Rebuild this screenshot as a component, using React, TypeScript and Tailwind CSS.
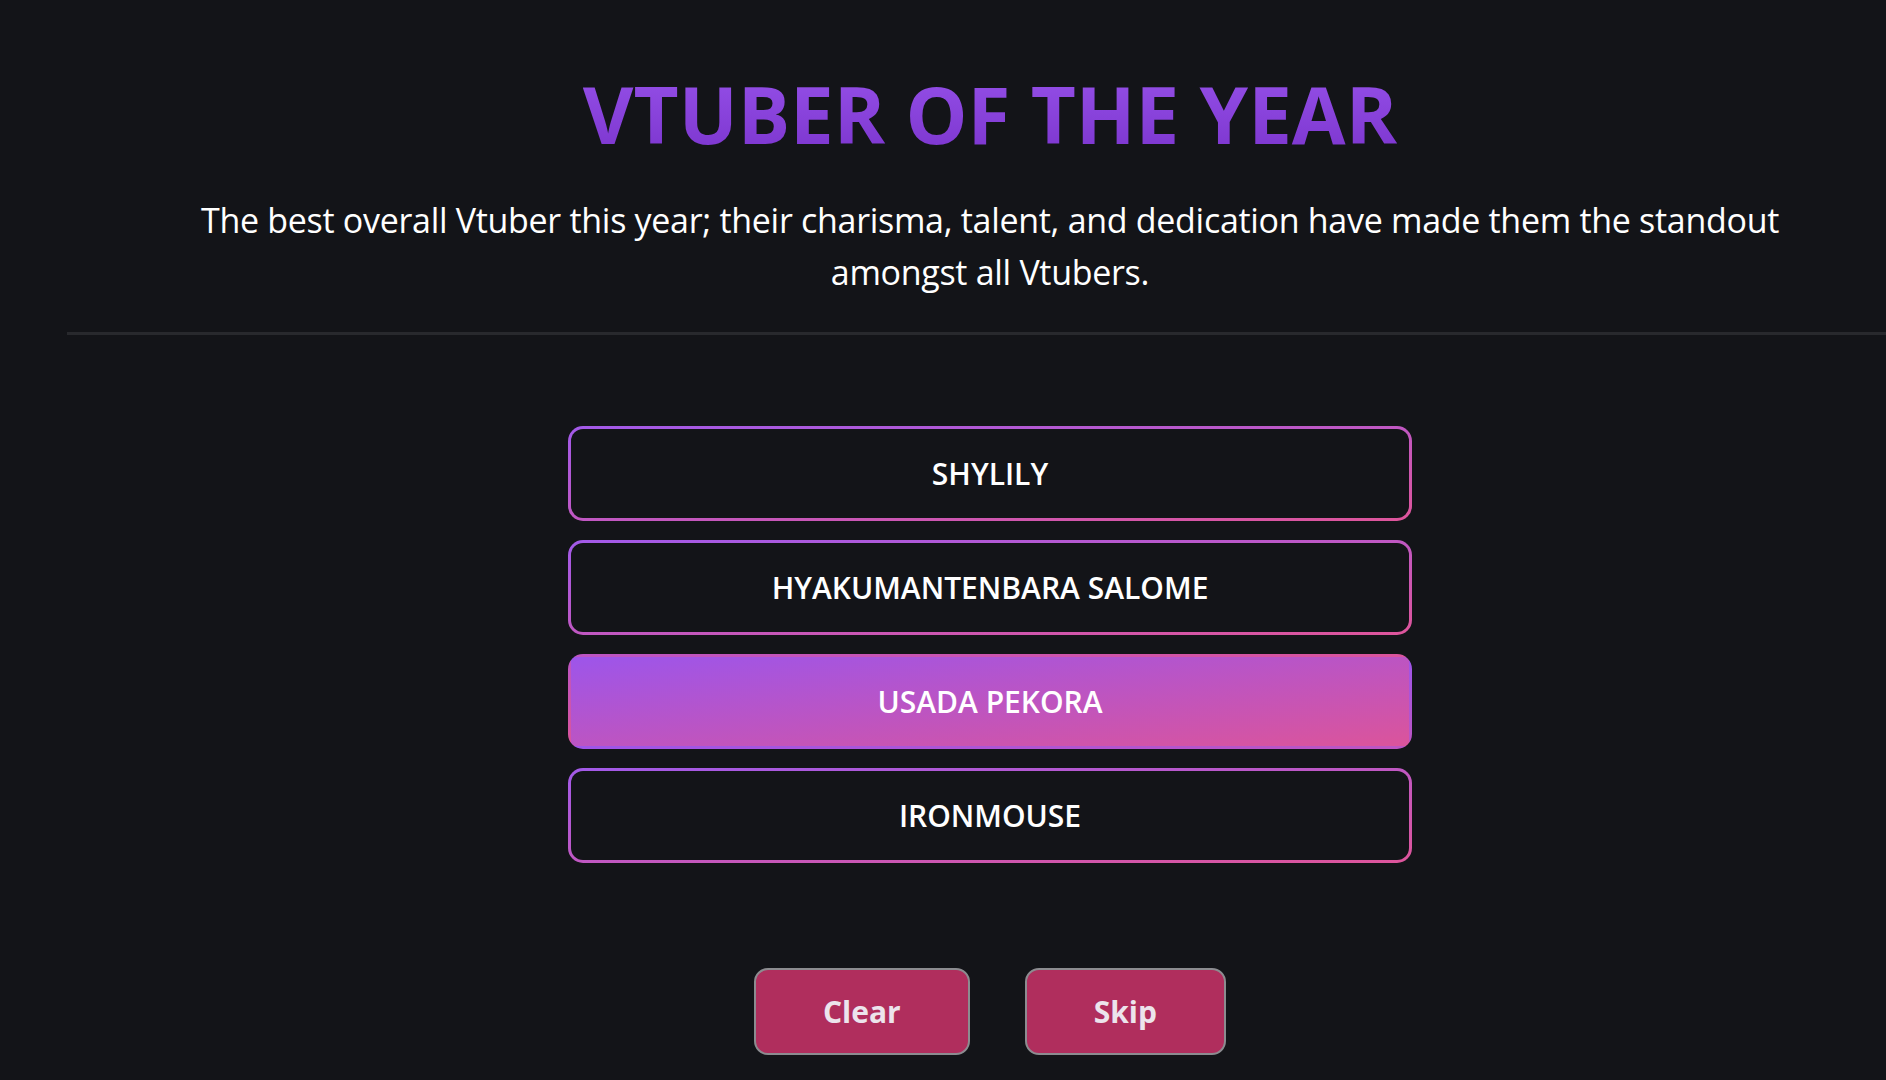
import { useState } from 'react';

const nominees = ['SHYLILY', 'HYAKUMANTENBARA SALOME', 'USADA PEKORA', 'IRONMOUSE'];

function NomineeButton({
  name,
  selected,
  onSelect,
}: {
  name: string;
  selected: boolean;
  onSelect: () => void;
}) {
  return (
    <button
      onClick={onSelect}
      className={
        selected
          ? 'flex h-[95px] w-full items-center justify-center rounded-[15px] border-[3px] border-transparent bg-[linear-gradient(to_bottom_right,#9d55ea,#db549b)] text-[30px] font-semibold text-white'
          : 'flex h-[95px] w-full items-center justify-center rounded-[15px] border-[3px] border-transparent [background:linear-gradient(#131418,#131418)_padding-box,linear-gradient(to_bottom_right,#a25ae9,#de559b)_border-box] text-[30px] font-semibold text-white'
      }
    >
      {name}
    </button>
  );
}

export default function App() {
  const [selected, setSelected] = useState<string | null>('USADA PEKORA');

  return (
    <div className="min-h-screen overflow-hidden bg-[#131418] font-['Open_Sans','Noto_Sans',sans-serif]">
      <div className="ml-[67px] flex w-[1846px] flex-col items-center">
        <h1 className="mt-[64px] bg-[linear-gradient(to_bottom,#9752ea,#7a33cc)] bg-clip-text text-[78px] leading-[100px] font-bold text-transparent">
          VTUBER OF THE YEAR
        </h1>
        <p className="mt-[30px] max-w-[1600px] text-center text-[34px] leading-[52px] tracking-[-0.3px] text-white">
          The best overall Vtuber this year; their charisma, talent, and dedication have made them the
          standout amongst all Vtubers.
        </p>
        <div className="mt-[34px] h-[3px] w-full bg-[#28292d]" />
        <div className="mt-[91px] flex w-[844px] flex-col gap-[19px]">
          {nominees.map((n) => (
            <NomineeButton key={n} name={n} selected={selected === n} onSelect={() => setSelected(n)} />
          ))}
        </div>
        <div className="mt-[105px] flex gap-[55px]">
          <button
            onClick={() => setSelected(null)}
            className="h-[87px] rounded-[14px] border-2 border-[#8c8c90] bg-[#b02e5d] px-[67px] text-[30px] font-bold text-[#ece4ec]"
          >
            Clear
          </button>
          <button className="h-[87px] rounded-[14px] border-2 border-[#8c8c90] bg-[#b02e5d] px-[67px] text-[30px] font-bold text-[#ece4ec]">
            Skip
          </button>
        </div>
      </div>
    </div>
  );
}
